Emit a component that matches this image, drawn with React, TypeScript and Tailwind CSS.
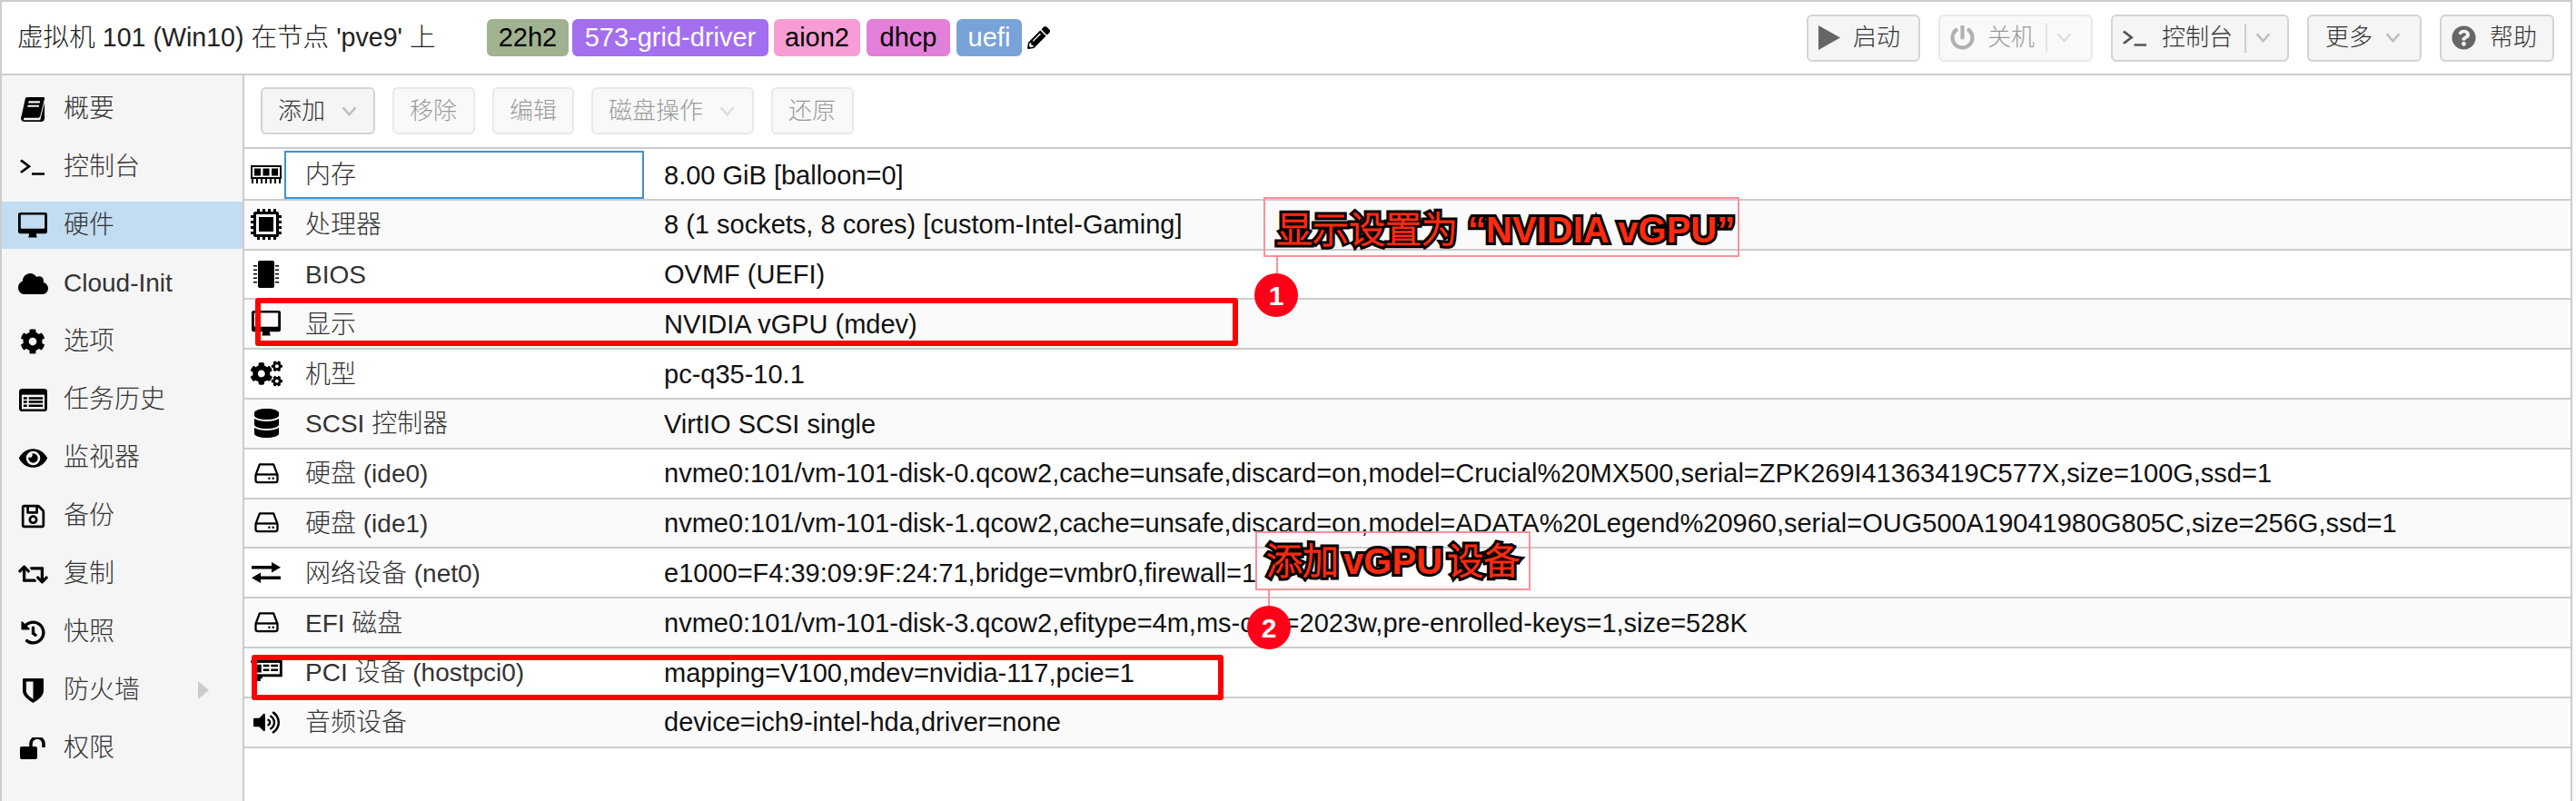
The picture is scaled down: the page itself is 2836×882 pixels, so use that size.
import React from "react";
import {
  FaCloud, FaCog, FaCogs, FaDatabase, FaEye, FaHistory, FaPowerOff,
  FaQuestionCircle, FaRetweet, FaVolumeUp, FaPencilAlt, FaRegSave,
} from "react-icons/fa";

const BookIcon = () => (
  <svg viewBox="0 0 28 32" preserveAspectRatio="none" className="w-[27px] h-[28px]" fill="#000">
    <path d="M7 1h19c1 0 1.500 1 1 2l-5 22c-.4 1.500-1.500 2-3 2H5c-1 0-2 .5-2 1.500S4 30 5 30h17l5-22v20c0 2-1.500 4-4 4H4c-2 0-4-2-4-4 0-1 .2-2 .6-3L5 3c.3-1 1-2 2-2z" />
    <path d="M9 6h13l-.6 2.500H8.400zM8 11h13l-.6 2.500H7.400z" fill="#f5f5f5" />
  </svg>
);
const TermIcon = ({ size = "w-[30px] h-[20px]", color = "#000" }: { size?: string; color?: string }) => (
  <svg viewBox="0 0 30 24" preserveAspectRatio="none" className={size} fill="none" stroke={color}>
    <path d="M2 3l9 8-9 8" strokeWidth="3" />
    <path d="M14 21h14" strokeWidth="3" />
  </svg>
);
const DesktopIcon = ({ light = false }: { light?: boolean }) => (
  <svg viewBox="0 0 34 36" preserveAspectRatio="none" className="w-[32px] h-[29px]">
    <path d="M3 0h28a3 3 0 0 1 3 3v23a3 3 0 0 1-3 3H21l1 5H12l1-5H3a3 3 0 0 1-3-3V3a3 3 0 0 1 3-3z" fill="#000" />
    <rect x="3" y="3" width="28" height="19" rx="1" fill={light ? "#fafafa" : "#c2ddf2"} />
  </svg>
);
const MemoryIcon = () => (
  <svg viewBox="0 0 34 20" className="w-[34px] h-[20px]" fill="#000">
    <path d="M0 0h34v15h-1v5h-2v-5h-3v5h-2v-5h-3v5h-2v-5h-3v5h-2v-5h-3v5H11v-5H8v5H6v-5H3v5H1v-5H0z" />
    <path d="M2 2h30v11H2z" fill="#fff" />
    <path d="M4 3.500h7v8H4zM13.500 3.500h7v8h-7zM23 3.500h7v8h-7z" />
  </svg>
);
const CpuIcon = () => (
  <svg viewBox="0 0 34 34" className="w-[34px] h-[34px]" fill="#000">
    <path d="M5 3h24a2 2 0 0 1 2 2v24a2 2 0 0 1-2 2H5a2 2 0 0 1-2-2V5a2 2 0 0 1 2-2z" />
    <path d="M6 6h22v22H6z" fill="#fafafa" />
    <path d="M9 9h16v16H9zM7 0h3v3H7zM13 0h3v3h-3zM19 0h3v3h-3zM25 0h3v3h-3zM7 31h3v3H7zM13 31h3v3h-3zM19 31h3v3h-3zM25 31h3v3h-3zM0 7h3v3H0zM0 13h3v3H0zM0 19h3v3H0zM0 25h3v3H0zM31 7h3v3h-3zM31 13h3v3h-3zM31 19h3v3h-3zM31 25h3v3h-3z" />
  </svg>
);
const ChipIcon = () => (
  <svg viewBox="0 0 28 30" className="w-[28px] h-[30px]" fill="#000">
    <rect x="5" y="0" width="18" height="30" rx="2" />
    <path d="M0 5h4v1.500H0zM0 9.500h4V11H0zM0 14h4v1.500H0zM0 18.500h4V20H0zM0 23h4v1.500H0zM24 5h4v1.500h-4zM24 9.500h4V11h-4zM24 14h4v1.500h-4zM24 18.500h4V20h-4zM24 23h4v1.500h-4z" />
  </svg>
);
const HddIcon = () => (
  <svg viewBox="0 0 28 24" className="w-[27px] h-[23px]" fill="none" stroke="#000" strokeWidth="2.400">
    <path d="M6 1.500h16l4.500 12v6a2.500 2.500 0 0 1-2.500 2.500H4a2.500 2.500 0 0 1-2.500-2.500v-6z" strokeLinejoin="round" />
    <path d="M2 13h24" />
    <circle cx="17" cy="17.500" r="1.300" fill="#000" stroke="none" />
    <circle cx="21.500" cy="17.500" r="1.300" fill="#000" stroke="none" />
  </svg>
);
const ExchangeIcon = () => (
  <svg viewBox="0 0 32 28" preserveAspectRatio="none" className="w-[32px] h-[23px]" fill="#000">
    <path d="M22 0l10 7-10 7v-5H0V5h22zM10 14v5h22v4H10v5L0 21z" />
  </svg>
);
const PciIcon = () => (
  <svg viewBox="0 0 36 24" className="w-[35px] h-[23px] -translate-y-[2px]" fill="#000">
    <path d="M0 0h36v19H13v2h-2v3H7v-3H4v-2H2V3H0z" />
    <path d="M4 3h29v13H4z" fill="#fff" />
    <path d="M6 5h6v9H6zM14 5h7v2.500h-7zM23 5h8v2.500h-8zM14 10h7v2.500h-7zM23 10h8v2.500h-8z" />
  </svg>
);
const ListIcon = () => (
  <svg viewBox="0 0 32 30" preserveAspectRatio="none" className="w-[31px] h-[25px]" fill="#000">
    <rect x="0" y="0" width="32" height="30" rx="4" />
    <path d="M3 8h26v19H3z" fill="#f5f5f5" />
    <path d="M5 11h4v3H5zM11 11h16v3H11zM5 16h4v3H5zM11 16h16v3H11zM5 21h4v3H5zM11 21h16v3H11z" />
  </svg>
);
const ShieldIcon = () => (
  <svg viewBox="0 0 24 32" preserveAspectRatio="none" className="w-[23px] h-[27px]" fill="#000">
    <path d="M1 0h22a1 1 0 0 1 1 1v15c0 8-8 13-12 16C8 29 0 24 0 16V1a1 1 0 0 1 1-1zm11 4H4v12c0 5 5 8.500 8 11z" fillRule="evenodd" />
  </svg>
);
const UnlockIcon = () => (
  <svg viewBox="0 0 29 24" className="w-[29px] h-[24px]" fill="#000">
    <rect x="0" y="10" width="19" height="14" rx="2" />
    <path d="M12 11V7a7 7 0 0 1 14 0v4" fill="none" stroke="#000" strokeWidth="3.500" />
  </svg>
);
const PlayIcon = () => (
  <svg viewBox="0 0 24 27" className="w-[24px] h-[27px]" fill="#666">
    <path d="M0 0l24 13.500L0 27z" />
  </svg>
);
const Chevron = ({ color = "#bbb" }: { color?: string }) => (
  <svg viewBox="0 0 18 12" className="w-[17px] h-[11px]" fill="none" stroke={color} strokeWidth="2.500">
    <path d="M1.500 1.500L9 10l7.500-8.500" />
  </svg>
);

const navItems = [
  { icon: <BookIcon />, label: "概要" },
  { icon: <TermIcon />, label: "控制台" },
  { icon: <DesktopIcon />, label: "硬件", active: true },
  { icon: <FaCloud size={33} color="#000" />, label: "Cloud-Init" },
  { icon: <FaCog size={28} color="#000" />, label: "选项" },
  { icon: <ListIcon />, label: "任务历史" },
  { icon: <FaEye size={31} color="#000" />, label: "监视器" },
  { icon: <FaRegSave size={29} color="#000" />, label: "备份" },
  { icon: <FaRetweet size={33} color="#000" />, label: "复制" },
  { icon: <FaHistory size={27} color="#000" />, label: "快照" },
  { icon: <ShieldIcon />, label: "防火墙", more: true },
  { icon: <UnlockIcon />, label: "权限" },
];

const rows = [
  { icon: <MemoryIcon />, name: "内存", value: "8.00 GiB [balloon=0]" },
  { icon: <CpuIcon />, name: "处理器", value: "8 (1 sockets, 8 cores) [custom-Intel-Gaming]" },
  { icon: <ChipIcon />, name: "BIOS", value: "OVMF (UEFI)" },
  { icon: <DesktopIcon light />, name: "显示", value: "NVIDIA vGPU (mdev)" },
  { icon: <FaCogs size={35} color="#000" />, name: "机型", value: "pc-q35-10.1" },
  { icon: <FaDatabase className="w-[27px] h-[32px]" preserveAspectRatio="none" color="#000" />, name: "SCSI 控制器", value: "VirtIO SCSI single" },
  { icon: <HddIcon />, name: "硬盘 (ide0)", value: "nvme0:101/vm-101-disk-0.qcow2,cache=unsafe,discard=on,model=Crucial%20MX500,serial=ZPK269I41363419C577X,size=100G,ssd=1" },
  { icon: <HddIcon />, name: "硬盘 (ide1)", value: "nvme0:101/vm-101-disk-1.qcow2,cache=unsafe,discard=on,model=ADATA%20Legend%20960,serial=OUG500A19041980G805C,size=256G,ssd=1" },
  { icon: <ExchangeIcon />, name: "网络设备 (net0)", value: "e1000=F4:39:09:9F:24:71,bridge=vmbr0,firewall=1" },
  { icon: <HddIcon />, name: "EFI 磁盘", value: "nvme0:101/vm-101-disk-3.qcow2,efitype=4m,ms-cert=2023w,pre-enrolled-keys=1,size=528K" },
  { icon: <PciIcon />, name: "PCI 设备 (hostpci0)", value: "mapping=V100,mdev=nvidia-117,pcie=1" },
  { icon: <FaVolumeUp size={29} color="#000" />, name: "音频设备", value: "device=ich9-intel-hda,driver=none" },
];

const tags = [
  { text: "22h2", cls: "w-[90px] mr-[4px] bg-[#a0b28f] text-black" },
  { text: "573-grid-driver", cls: "w-[216px] mr-[6px] bg-[#a36ef0] text-white" },
  { text: "aion2", cls: "w-[95px] mr-[7px] bg-[#f89cd5] text-black" },
  { text: "dhcp", cls: "w-[92px] mr-[7px] bg-[#e37fd9] text-black" },
  { text: "uefi", cls: "w-[72px] mr-[6px] bg-[#78a3d8] text-white" },
];

const toolbar = [
  { label: "添加", cls: "w-[126px]", caret: true, on: true },
  { label: "移除", cls: "w-[91px]" },
  { label: "编辑", cls: "w-[90px]" },
  { label: "磁盘操作", cls: "w-[179px]", caret: true },
  { label: "还原", cls: "w-[91px]" },
];

const btn = "flex items-center h-[52px] border-2 rounded-[6px] text-[26px] text-[#333]";

export default function App() {
  return (
    <div className="relative w-[2836px] h-[882px] overflow-hidden bg-white text-[28px] font-light text-[#111] font-['Liberation_Sans','Noto_Sans_CJK_SC_Light','Noto_Sans_CJK_SC',sans-serif]">
      <div className="w-[2832px] h-full flex flex-col border-x-2 border-[#ccc]">
        <header className="h-[83px] shrink-0 flex items-center border-y-2 border-[#ccc] pl-[17px] pr-[18px]">
          <span className="w-[517px] text-[28.600px] text-[#222]">虚拟机 101 (Win10) 在节点 'pve9' 上</span>
          {tags.map((t) => (
            <span key={t.text} className={`${t.cls} h-[41px] text-[29px] rounded-[6px] flex items-center justify-center`}>
              {t.text}
            </span>
          ))}
          <FaPencilAlt size={25} color="#000" />
          <div className="ml-auto flex gap-[20px]">
            <button className={`${btn} w-[125px] bg-[#f5f5f5] border-[#d4d4d4] pl-[11px] gap-[14px]`}>
              <PlayIcon /> 启动
            </button>
            <button className={`${btn} w-[170px] bg-[#f5f5f5] border-[#d4d4d4] pl-[11px] opacity-50`}>
              <FaPowerOff size={27} color="#666" />
              <span className="ml-[14px]">关机</span>
              <span className="w-[2px] h-[32px] bg-[#ccc] ml-[12px] mr-[10px]" />
              <Chevron />
            </button>
            <button className={`${btn} w-[196px] bg-[#f5f5f5] border-[#d4d4d4] pl-[10px]`}>
              <TermIcon size="w-[29px] h-[20px]" color="#555" />
              <span className="ml-[15px]">控制台</span>
              <span className="w-[2px] h-[32px] bg-[#ccc] ml-[13px] mr-[10px]" />
              <Chevron />
            </button>
            <button className={`${btn} w-[126px] bg-[#f5f5f5] border-[#d4d4d4] pl-[18px]`}>
              更多 <span className="ml-[14px]"><Chevron /></span>
            </button>
            <button className={`${btn} w-[126px] bg-[#f5f5f5] border-[#d4d4d4] pl-[11px] gap-[15px]`}>
              <FaQuestionCircle size={27} color="#666" /> 帮助
            </button>
          </div>
        </header>
        <div className="flex flex-1 min-h-0">
          <nav className="w-[265px] shrink-0 bg-[#f5f5f5] pt-[11px] flex flex-col gap-[12px] text-[#333]">
            {navItems.map((item) => (
              <div
                key={item.label}
                className={`h-[52px] shrink-0 flex items-center ${item.active ? "bg-[#c2ddf2]" : ""}`}
              >
                <span className="w-[68px] flex justify-center">{item.icon}</span>
                <span>{item.label}</span>
                {item.more && <span className="ml-auto mr-[37px] border-l-[12px] border-l-[#ccc] border-y-[10px] border-y-transparent" />}
              </div>
            ))}
          </nav>
          <main className="flex-1 border-l-2 border-[#ccc] min-w-0 pl-0 bg-white">
            <div className="h-[81px] border-b-2 border-[#ccc] flex gap-[19px] pl-[18px] pt-[13px]">
              {toolbar.map((b) => (
                <button
                  key={b.label}
                  className={`${btn} ${b.cls} bg-[#f5f5f5] border-[#d4d4d4] pl-[17px] ${b.on ? "" : "opacity-50"}`}
                >
                  {b.label}
                  {b.caret && <span className="ml-[18px]"><Chevron /></span>}
                </button>
              ))}
            </div>
            <div className="pt-[2px]">
              {rows.map((r, i) => (
                <div
                  key={r.name}
                  className={`relative h-[54.800px] flex items-center border-b-2 border-[#ccc] whitespace-nowrap ${i % 2 ? "bg-[#fafafa]" : "bg-white"}`}
                >
                  {i === 0 && <span className="absolute left-[44px] top-0 w-[396px] h-[53px] border-2 border-[#3d92ce]" />}
                  <span className="w-[48px] flex justify-center">{r.icon}</span>
                  <span className="w-[414px] pl-[19px] pt-[2px] text-[#333]">{r.name}</span>
                  <span className="pt-[2px] text-[29px] text-[#111]">{r.value}</span>
                </div>
              ))}
            </div>
          </main>
        </div>
      </div>

      {/* annotations */}
      <div className="absolute left-[281px] top-[328px] w-[1082px] h-[53px] border-[6px] border-[#ff0000] rounded-[3px]" />
      <div className="absolute left-[277px] top-[721px] w-[1070px] h-[50px] border-[6px] border-[#ff0000] rounded-[3px]" />

      <div className="absolute left-[1391px] top-[217px] w-[524px] h-[66px] border-2 border-[#ff8f9a] flex items-center pl-[12px] pt-[5px] whitespace-nowrap text-[40px] font-bold text-[#ff2a10] [-webkit-text-stroke:6px_#000] [paint-order:stroke_fill]">
        显示设置为 “NVIDIA vGPU”
      </div>
      <div className="absolute left-[1405px] top-[283px] w-[2px] h-[20px] bg-[#ff8f9a]" />
      <div className="absolute left-[1381px] top-[301px] w-[48px] h-[48px] rounded-full bg-[#ff0018] text-white text-[30px] font-bold flex items-center justify-center">1</div>

      <div className="absolute left-[1382px] top-[585px] w-[303px] h-[65px] border-2 border-[#ff8f9a] flex items-center pl-[10px] whitespace-nowrap text-[40px] font-bold text-[#ff2a10] [-webkit-text-stroke:6px_#000] [paint-order:stroke_fill] [word-spacing:-6px]">
        添加 vGPU 设备
      </div>
      <div className="absolute left-[1396px] top-[650px] w-[2px] h-[18px] bg-[#ff8f9a]" />
      <div className="absolute left-[1373px] top-[667px] w-[48px] h-[48px] rounded-full bg-[#ff0018] text-white text-[30px] font-bold flex items-center justify-center">2</div>
    </div>
  );
}
